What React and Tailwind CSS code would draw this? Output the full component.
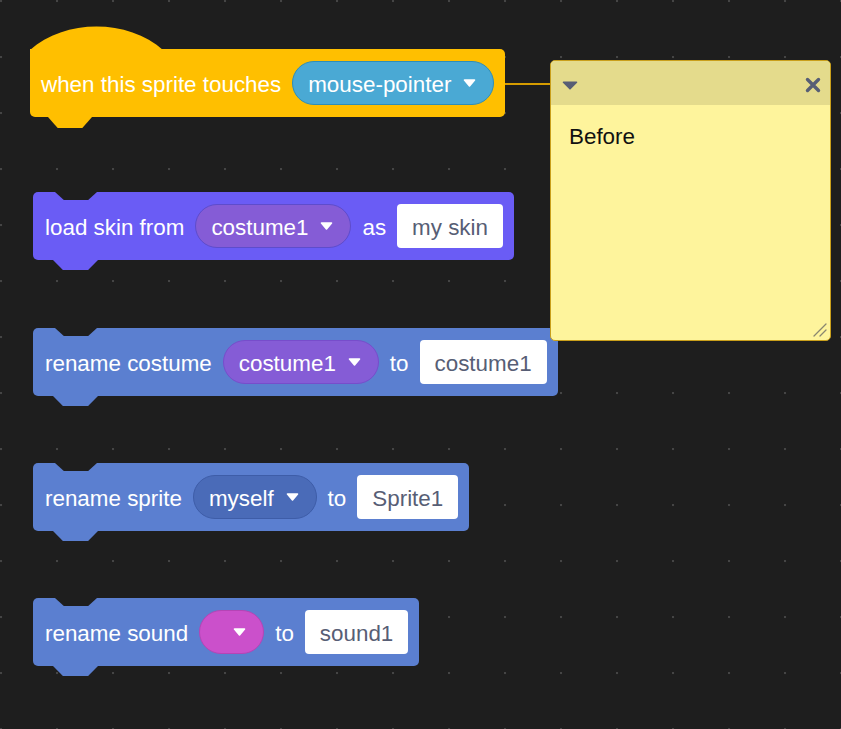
import React from "react";

const Arrow = () => (
  <svg width="13" height="8" viewBox="0 0 13 8" className="block shrink-0">
    <path d="M1.5 1 H11.5 L6.5 7 Z" fill="white" stroke="white" strokeWidth="1.6" strokeLinejoin="round" />
  </svg>
);

const Dropdown = ({ label, cls }) => (
  <div className={`flex items-center h-[44px] rounded-full border ${cls} ${label ? "pl-[15px]" : "pl-[33px]"} pr-[17px] gap-3`}>
    {label ? <span className="leading-none pt-[4px] text-white whitespace-nowrap">{label}</span> : null}
    <Arrow />
  </div>
);

const Input = ({ value }) => (
  <div className="flex items-center h-[44px] rounded-[4px] bg-white px-[15px]">
    <span className="leading-none pt-[4px] text-[#575e75] whitespace-nowrap">{value}</span>
  </div>
);

const Txt = ({ children }) => <span className="leading-none pt-[4px] text-white whitespace-nowrap">{children}</span>;

const Block = ({ bg, tab, className, children }) => (
  <div className={`relative flex items-center gap-[11px] h-[68px] rounded-[5px] pl-[12px] pr-[11px] ${bg} ${className}`}>
    <div className="absolute top-0 left-[22px] w-[42px] h-[8px] bg-[#1e1e1e] [clip-path:polygon(0_0,100%_0,79%_100%,21%_100%)]" />
    <div className={`absolute top-full left-[20px] w-[45px] h-[10px] ${tab} [clip-path:polygon(0_0,100%_0,78%_100%,22%_100%)]`} />
    {children}
  </div>
);

export default function App() {
  return (
    <div className="relative w-[841px] h-[729px] overflow-hidden bg-[#1e1e1e] bg-[radial-gradient(circle_at_1px_1px,#454545_1px,transparent_1.6px)] bg-[size:56px_56px] font-['Liberation_Sans',Arial,sans-serif] text-[22.4px]">
      <div className="flex flex-col items-start pl-[33px] pt-[26px]">
        {/* hat block */}
        <div className="flex flex-col items-start -ml-[3px]">
          <svg width="133" height="24" viewBox="0 0 133 24" className="block -mb-px">
            <path d="M0 24 C34.6 -7.5 98.4 -7.5 133 24 Z" fill="#ffbf00" />
          </svg>
          <div className="relative flex items-center gap-[11px] h-[68px] rounded-[5px] rounded-tl-none bg-[#ffbf00] pl-[11px] pr-[11px]">
            <div className="absolute top-full left-[18px] w-[44px] h-[11px] bg-[#ffbf00] [clip-path:polygon(0_0,100%_0,78%_100%,22%_100%)]" />
            <Txt>when this sprite touches</Txt>
            <Dropdown label="mouse-pointer" cls="bg-[#4aa9d4] border-[#2e8eb8]" />
          </div>
        </div>

        <Block bg="bg-[#6a5cf5]" tab="bg-[#6a5cf5]" className="mt-[75px]">
          <Txt>load skin from</Txt>
          <Dropdown label="costume1" cls="bg-[#855cd6] border-[#5e4ccc]" />
          <Txt>as</Txt>
          <Input value="my skin" />
        </Block>

        <Block bg="bg-[#5b7fd0]" tab="bg-[#5b7fd0]" className="mt-[68px]">
          <Txt>rename costume</Txt>
          <Dropdown label="costume1" cls="bg-[#855cd6] border-[#774dcb]" />
          <Txt>to</Txt>
          <Input value="costume1" />
        </Block>

        <Block bg="bg-[#5b7fd0]" tab="bg-[#5b7fd0]" className="mt-[67px]">
          <Txt>rename sprite</Txt>
          <Dropdown label="myself" cls="bg-[#4a6bb8] border-[#3e5da8]" />
          <Txt>to</Txt>
          <Input value="Sprite1" />
        </Block>

        <Block bg="bg-[#5b7fd0]" tab="bg-[#5b7fd0]" className="mt-[67px]">
          <Txt>rename sound</Txt>
          <Dropdown label="" cls="bg-[#cb50cb] border-[#b544b5]" />
          <Txt>to</Txt>
          <Input value="sound1" />
        </Block>
      </div>

      {/* connector */}
      <div className="absolute left-[505px] top-[83px] w-[46px] h-[1.5px] bg-[#d69c00]" />

      {/* comment */}
      <div className="absolute left-[550px] top-[60px] w-[281px] h-[281px] rounded-[5px] border border-[#c99f1b] bg-[#fef49c] overflow-hidden flex flex-col">
        <div className="h-[44px] shrink-0 bg-[#e4db8c] flex items-center justify-between pl-[11px] pr-[9px] pt-[4px]">
          <svg width="16" height="9" viewBox="0 0 16 9" className="block">
            <path d="M1.5 1.2 H14.5 L8 7.8 Z" fill="#575e75" stroke="#575e75" strokeWidth="1.6" strokeLinejoin="round" />
          </svg>
          <svg width="16" height="16" viewBox="0 0 16 16" className="block">
            <path d="M2.5 2.5 L13.5 13.5 M13.5 2.5 L2.5 13.5" stroke="#575e75" strokeWidth="3.4" strokeLinecap="round" />
          </svg>
        </div>
        <div className="pt-[19px] pl-[18px] text-[#111] leading-[normal]">Before</div>
        <svg width="16" height="16" viewBox="0 0 16 16" className="absolute right-[2px] bottom-[2px]">
          <path d="M2 14 L14 2 M8 14 L14 8" stroke="#8a8670" strokeWidth="1.3" strokeLinecap="round" />
        </svg>
      </div>
    </div>
  );
}
